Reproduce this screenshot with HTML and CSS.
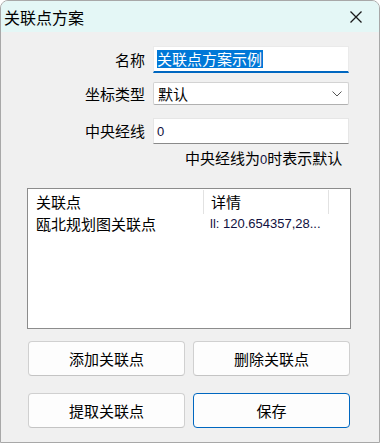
FILE: index.html
```html
<!DOCTYPE html>
<html lang="zh-CN">
<head>
    <meta charset="UTF-8">
    <meta name="viewport" content="width=device-width, initial-scale=1.0">
    <title>关联点方案</title>
    <link rel="stylesheet" href="styles.css">
</head>
<body>
    <div class="window">
        <div class="titlebar">
            <span class="title">关联点方案</span>
            <svg class="close" width="14" height="14" viewBox="0 0 14 14">
                <path d="M1.5 1.5 L12.5 12.5 M12.5 1.5 L1.5 12.5" stroke="#1a1a1a" stroke-width="1.3" fill="none"/>
            </svg>
        </div>

        <div class="content">
            <div class="field field-name">
                <label class="field-label">名称</label>
                <div class="textbox focused"><span class="selected">关联点方案示例</span></div>
            </div>

            <div class="field field-type">
                <label class="field-label">坐标类型</label>
                <div class="combo">
                    <span>默认</span>
                    <svg class="chevron" width="10" height="6" viewBox="0 0 10 6">
                        <path d="M0.5 0.5 L5 5 L9.5 0.5" stroke="#555" stroke-width="1" fill="none"/>
                    </svg>
                </div>
            </div>

            <div class="field field-meridian">
                <label class="field-label">中央经线</label>
                <div class="textbox plain"><span class="digit">0</span></div>
            </div>

            <div class="hint">中央经线为<span class="digit">0</span>时表示默认</div>

            <div class="listview">
                <div class="list-header">
                    <div class="col col-name">关联点</div>
                    <div class="col col-detail">详情</div>
                </div>
                <div class="list-row">
                    <div class="col col-name">瓯北规划图关联点</div>
                    <div class="col col-detail detail-text">ll: 120.654357,28...</div>
                </div>
            </div>

            <div class="buttons">
                <button class="btn">添加关联点</button>
                <button class="btn">删除关联点</button>
                <button class="btn">提取关联点</button>
                <button class="btn primary">保存</button>
            </div>
        </div>
    </div>
</body>
</html>
```

FILE: styles.css
```css
* {
    margin: 0;
    padding: 0;
    box-sizing: border-box;
}

html, body {
    background: #ffffff;
}

body {
    font-family: "Noto Sans CJK SC", "Noto Sans", sans-serif;
    font-size: 15px;
    color: #000;
}

.window {
    width: 380px;
    height: 443px;
    background: #f0f0f0;
    border: 1px solid #a8a8a8;
    border-radius: 8px 8px 0 0;
    overflow: hidden;
}

.titlebar {
    height: 31px;
    background: #e4f7f6;
    display: flex;
    align-items: center;
    justify-content: space-between;
    padding: 0 16px 0 3px;
}

.title {
    font-size: 16px;
    line-height: 20px;
    margin-top: 1px;
}

.close {
    display: block;
}

.content {
    padding-top: 14px;
}

.field {
    display: flex;
    align-items: center;
}

.field-label {
    width: 144px;
    margin-right: 8px;
    text-align: right;
    line-height: 20px;
}

.field-name {
    height: 27px;
}

.field-type {
    height: 23px;
    margin-top: 9px;
}

.field-meridian {
    height: 26px;
    margin-top: 13px;
}

.textbox {
    width: 196px;
    height: 100%;
    background: #fff;
    display: flex;
    align-items: center;
}

.textbox.focused {
    border: 1px solid #eaeaea;
    border-bottom: 2px solid #0067c0;
    padding-left: 3px;
}

.textbox.plain {
    border: 1px solid #e6e6e6;
    border-bottom: 1px solid #8a8a8a;
    padding-left: 3px;
}

.selected {
    background: #0078d7;
    color: #fff;
    line-height: 18px;
    padding-right: 1px;
}

.digit {
    font-family: "Liberation Sans", sans-serif;
    font-size: 13px;
    color: #101040;
}

.combo {
    width: 196px;
    height: 100%;
    background: #fff;
    border: 1px solid #d3d3d3;
    border-bottom-color: #b0b0b0;
    border-radius: 2px;
    display: flex;
    align-items: center;
    justify-content: space-between;
    padding: 0 6px 0 4px;
    line-height: 20px;
}

.chevron {
    display: block;
}

.hint {
    margin-top: 4px;
    padding-left: 184px;
    line-height: 20px;
}

.listview {
    margin: 18px 0 0 26px;
    width: 324px;
    height: 141px;
    background: #fff;
    border: 1px solid #8c8c8c;
}

.list-header,
.list-row {
    display: flex;
}

.list-header {
    height: 24px;
    margin-top: 1px;
}

.list-header .col {
    line-height: 24px;
}

.list-header .col-name {
    border-right: 1px solid #e2e2e2;
}

.list-header .col-detail {
    border-right: 1px solid #e2e2e2;
}

.col-name {
    width: 176px;
    padding-left: 8px;
}

.col-detail {
    width: 125px;
    padding-left: 7px;
}

.list-row .col {
    line-height: 20px;
}

.list-row .col-detail {
    padding-left: 6px;
}

.detail-text {
    font-family: "Liberation Sans", sans-serif;
    font-size: 13px;
    color: #101040;
    white-space: nowrap;
}

.buttons {
    display: grid;
    grid-template-columns: 157px 157px;
    column-gap: 8px;
    row-gap: 17px;
    margin: 12px 0 0 27px;
}

.btn {
    height: 35px;
    background: #fdfdfd;
    border: 1px solid #d0d0d0;
    border-bottom-color: #c4c4c4;
    border-radius: 4px;
    font-family: "Noto Sans CJK SC", "Noto Sans", sans-serif;
    font-size: 15px;
    color: #000;
    line-height: 20px;
}

.btn.primary {
    border: 1px solid #0067c0;
}
```
